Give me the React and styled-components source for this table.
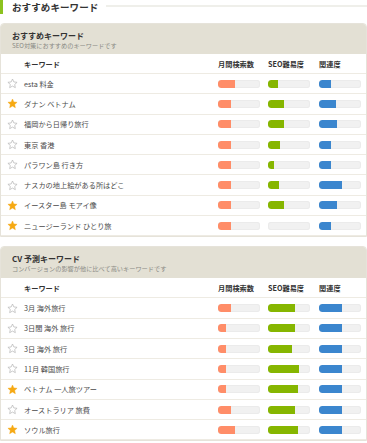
import React from "react";
import styled, { createGlobalStyle } from "styled-components";

const Global = createGlobalStyle`
  html, body { margin: 0; padding: 0; background: #fff; }
  body { font-family: "Noto Sans CJK JP", "Noto Sans", sans-serif; color: #333; }
`;

const Page = styled.div`
  width: 367px;
  display: flex;
  flex-direction: column;
`;

const TitleBar = styled.div`
  display: flex;
  align-items: center;
  height: 14px;
  gap: 8px;
  margin-bottom: 9px;
`;

const Title = styled.h1`
  margin: 0;
  border-left: 3px solid #8cc21f;
  padding-left: 9px;
  font-size: 9.5px;
  line-height: 14px;
  font-weight: 700;
  letter-spacing: 0.1px;
  color: #333;
  white-space: nowrap;
`;

const TitleLine = styled.div`
  flex: 1;
  height: 2px;
  background: #efefea;
  margin-top: -2px;
`;

const Card = styled.section`
  border: 1px solid #e6e3da;
  border-radius: 4px 4px 0 0;
  margin-bottom: ${(p) => p.$mb || 0}px;
  overflow: hidden;
`;

const CardHead = styled.div`
  background: #e3e0d4;
  height: ${(p) => p.$h}px;
  padding-left: 11px;
  display: flex;
  flex-direction: column;
  justify-content: center;
  box-sizing: border-box;
  padding-top: 1px;
`;

const CardTitle = styled.div`
  font-size: 8px;
  line-height: 11px;
  font-weight: 700;
  color: #333;
`;

const CardSub = styled.div`
  font-size: 6.2px;
  line-height: 9px;
  color: #8a8a84;
`;

const Row = styled.div`
  display: grid;
  grid-template-columns: 23px 194px 50px 51px 1fr;
  align-items: center;
  height: ${(p) => p.$h}px;
  border-bottom: 1px solid #eeebe3;
  box-sizing: content-box;
`;

const HeadCell = styled.div`
  font-size: 7.2px;
  font-weight: 700;
  color: #333;
  white-space: nowrap;
`;

const Keyword = styled.div`
  font-size: 7.2px;
  color: #4a4a4a;
  white-space: nowrap;
`;

const StarCell = styled.div`
  display: flex;
  justify-content: center;
`;

const Track = styled.div`
  width: 42px;
  height: 8px;
  border-radius: 3px;
  background: #f1f1f1;
  box-shadow: inset 0 0 0 1px #ebebeb;
  overflow: hidden;
  display: flex;
`;

const Fill = styled.div`
  height: 100%;
  border-radius: 3px 0 0 3px;
  background: ${(p) => p.$color};
`;

const Star = ({ on }) => (
  <svg width="11" height="11" viewBox="0 0 24 24">
    <path
      d="M12 2.2l2.95 6.45 7.05.75-5.28 4.75 1.5 6.95L12 17.6l-6.22 3.5 1.5-6.95L2 9.4l7.05-.75z"
      fill={on ? "#f6a913" : "none"}
      stroke={on ? "#f6a913" : "#b8b8b8"}
      strokeWidth={on ? 1 : 1.6}
      strokeLinejoin="round"
    />
  </svg>
);

const Bar = ({ v, color }) => (
  <Track>
    {v > 0 && <Fill $color={color} style={{ width: v }} />}
  </Track>
);

const ORANGE = "#ff8d68";
const GREEN = "#86b600";
const BLUE = "#3b86ce";

const ROW_H = 19.3;

const Table = ({ rows }) => (
  <>
    <Row $h={19}>
      <span />
      <HeadCell>キーワード</HeadCell>
      <HeadCell>月間検索数</HeadCell>
      <HeadCell>SEO難易度</HeadCell>
      <HeadCell>関連度</HeadCell>
    </Row>
    {rows.map((r, i) => (
      <Row key={i} $h={ROW_H}>
        <StarCell>
          <Star on={r.star} />
        </StarCell>
        <Keyword>{r.k}</Keyword>
        <Bar v={r.a} color={ORANGE} />
        <Bar v={r.b} color={GREEN} />
        <Bar v={r.c} color={BLUE} />
      </Row>
    ))}
  </>
);

const rec = [
  { k: "esta 料金", star: false, a: 17, b: 10, c: 12 },
  { k: "ダナン ベトナム", star: true, a: 13, b: 16, c: 17 },
  { k: "福岡から日帰り旅行", star: false, a: 13, b: 16, c: 18 },
  { k: "東京 香港", star: false, a: 13, b: 12, c: 12 },
  { k: "パラワン島 行き方", star: false, a: 13, b: 6, c: 12 },
  { k: "ナスカの地上絵がある所はどこ", star: false, a: 13, b: 11, c: 23 },
  { k: "イースター島 モアイ像", star: true, a: 13, b: 16, c: 18 },
  { k: "ニュージーランド ひとり旅", star: true, a: 13, b: 0, c: 12 },
];

const cv = [
  { k: "3月 海外旅行", star: false, a: 13, b: 27, c: 23 },
  { k: "3日間 海外 旅行", star: false, a: 8, b: 27, c: 23 },
  { k: "3日 海外 旅行", star: false, a: 8, b: 24, c: 23 },
  { k: "11月 韓国旅行", star: false, a: 8, b: 31, c: 23 },
  { k: "ベトナム 一人旅ツアー", star: true, a: 8, b: 30, c: 23 },
  { k: "オーストラリア 旅費", star: false, a: 13, b: 27, c: 23 },
  { k: "ソウル旅行", star: true, a: 17, b: 30, c: 23 },
];

export default function App() {
  return (
    <Page>
      <Global />
      <TitleBar>
        <Title>おすすめキーワード</Title>
        <TitleLine />
      </TitleBar>
      <Card $mb={9}>
        <CardHead $h={30}>
          <CardTitle>おすすめキーワード</CardTitle>
          <CardSub>SEO対策におすすめのキーワードです</CardSub>
        </CardHead>
        <Table rows={rec} />
      </Card>
      <Card>
        <CardHead $h={31}>
          <CardTitle>CV 予測キーワード</CardTitle>
          <CardSub>コンバージョンの影響が他に比べて高いキーワードです</CardSub>
        </CardHead>
        <Table rows={cv} />
      </Card>
    </Page>
  );
}
